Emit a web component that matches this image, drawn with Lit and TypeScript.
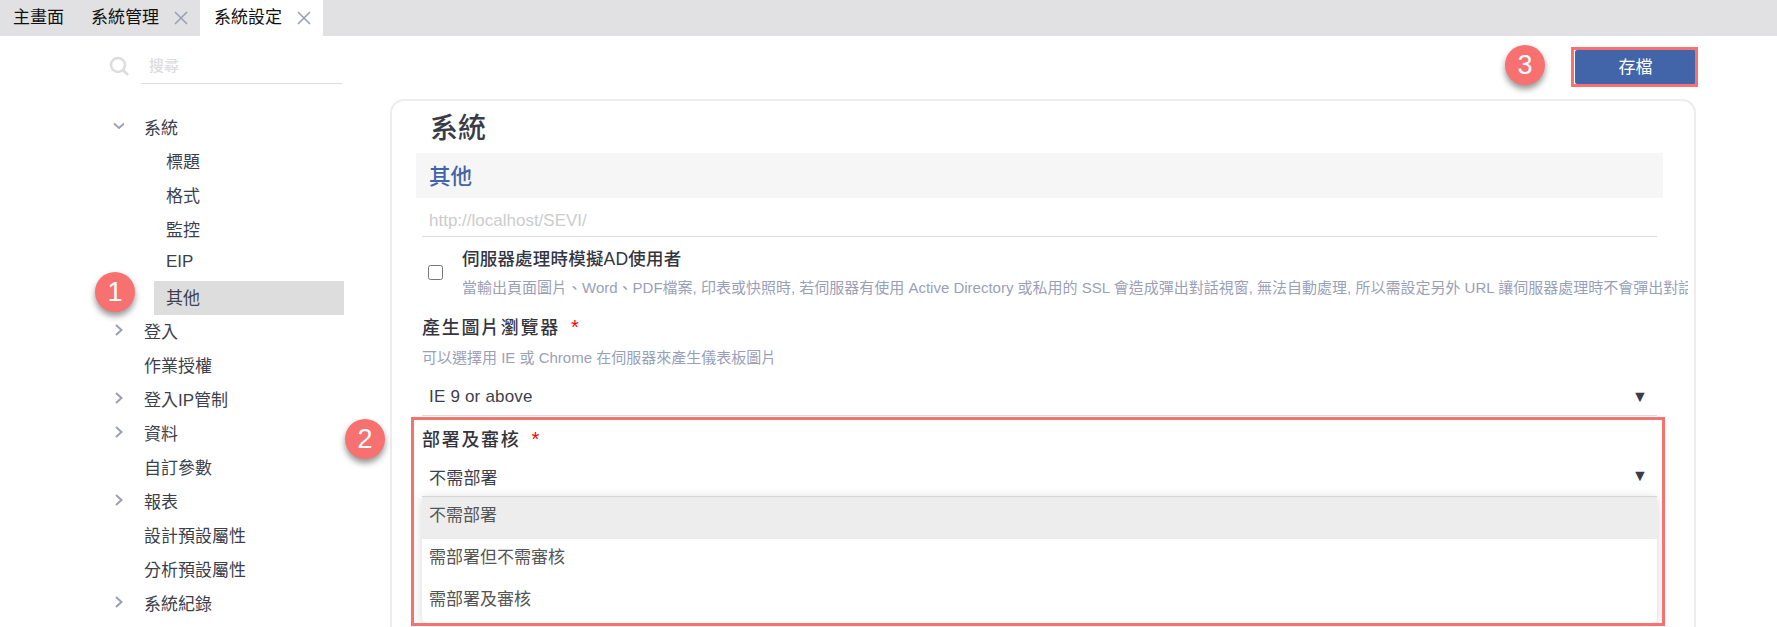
import { LitElement, html, css } from "lit";
import { customElement } from "lit/decorators.js";

const close = html`<svg class="x" viewBox="0 0 16 16" width="16" height="16"><path d="M2 2L14 14M14 2L2 14" stroke="#9a9fb2" stroke-width="1.6" fill="none"/></svg>`;
const chevRight = html`<svg viewBox="0 0 12 14" width="12" height="14"><path d="M3 2L8.5 7L3 12" stroke="#9a9fb8" stroke-width="2" fill="none"/></svg>`;
const chevDown = html`<svg viewBox="0 0 12 14" width="12" height="14"><path d="M1 4.5L6 9L11 4.5" stroke="#9a9fb8" stroke-width="1.8" fill="none"/></svg>`;

type NavItem = { label: string; chev?: "r" | "d"; sub?: boolean; active?: boolean };
const nav: NavItem[] = [
  { label: "系統", chev: "d" },
  { label: "標題", sub: true },
  { label: "格式", sub: true },
  { label: "監控", sub: true },
  { label: "EIP", sub: true },
  { label: "其他", sub: true, active: true },
  { label: "登入", chev: "r" },
  { label: "作業授權" },
  { label: "登入IP管制", chev: "r" },
  { label: "資料", chev: "r" },
  { label: "自訂參數" },
  { label: "報表", chev: "r" },
  { label: "設計預設屬性" },
  { label: "分析預設屬性" },
  { label: "系統紀錄", chev: "r" },
];

@customElement("app-root")
export class AppRoot extends LitElement {
  static styles = css`
    :host {
      display: block;
      height: 627px;
      overflow: hidden;
      background: #fff;
      position: relative;
      font-family: "Liberation Sans", "Noto Sans CJK TC", sans-serif;
      font-size: 17px;
      color: #3c3f4d;
    }
    .tabs { display: flex; height: 36px; background: #e1e1e4; color: #111; white-space: nowrap; }
    .tab { display: flex; align-items: center; gap: 14px; padding: 0 0 0 13px; line-height: 36px; box-sizing: border-box; }
    .tab.first { width: 66px; }
    .tab.second { width: 134px; padding-left: 25px; }
    .tab.on { background: #fff; width: 123px; padding-left: 14px; }
    .x { flex: none; }
    .body { display: flex; }
    .side { width: 390px; flex: none; box-sizing: border-box; padding: 13px 46px 0 109px; }
    .search { display: flex; align-items: center; gap: 12px; height: 34px; margin-right: 2px; }
    .search svg { flex: none; }
    .search .q { flex: 1; height: 34px; line-height: 34px; border-bottom: 1px solid #ddd; padding-left: 8px; color: #ddd; font-size: 15px; font-weight: 500; }
    .nav { margin-top: 28px; margin-left: 1px; }
    .row { height: 34px; padding-bottom: 4px; box-sizing: border-box; display: flex; align-items: center; }
    .row .ch { width: 34px; flex: none; display: flex; padding-left: 3px; box-sizing: border-box; }
    .row.sub { margin-left: 44px; padding-left: 12px; }
    .row.active { background: #ddd; }
    .main { width: 1308px; flex: none; }
    .bar { display: flex; justify-content: flex-end; padding: 14px 2px 0 0; height: 63px; box-sizing: border-box; }
    .save { width: 121px; height: 34px; background: #4264a9; color: #fff; border: 0; border-radius: 2px; font: inherit; font-size: 17px; padding: 0 0 3px; }
    .card { border: 2px solid #ededed; border-bottom: 0; border-radius: 14px 14px 0 0; height: 560px; box-sizing: border-box; padding: 2px 30px 0 24px; width: 1306px; }
    h1 { margin: 0; font-size: 28px; font-weight: 500; height: 50px; line-height: 52px; padding-left: 14px; color: #3a3c48; }
    h2 { margin: 0; width: 1247px; height: 45px; line-height: 49px; background: #f6f6f6; color: #4264a9; font-size: 21.5px; font-weight: 500; padding-left: 13px; box-sizing: border-box; }
    .inner { margin-left: 6px; width: 1235px; }
    .url { height: 38px; line-height: 45px; border-bottom: 1px solid #ddd; padding-left: 7px; color: #ccc; }
    .check { display: flex; align-items: center; margin-top: 9px; height: 54px; }
    .check input { width: 15px; height: 15px; margin: 0 19px 2px 6px; flex: none; accent-color: #555; }
    .check .txt { white-space: nowrap; width: 1226px; overflow: hidden; flex: none; }
    .check .lbl { color: #33353f; font-weight: 500; font-size: 17.5px; letter-spacing: 0.2px; line-height: 26px; }
    .check .desc { margin-top: 4px; }
    .desc { color: #9a9fb8; font-size: 15px; line-height: 24px; }
    .field-label { font-weight: 500; font-size: 18px; color: #33353f; line-height: 26px; letter-spacing: 1.7px; }
    .req { color: #f00; margin-left: 11px; font-size: 20px; }
    .f1 { margin-top: 14px; }
    .f1 .desc { margin-top: 5px; }
    .select { display: flex; justify-content: space-between; align-items: center; padding: 0 9px 0 7px; height: 36px; border-bottom: 1px solid #ddd; letter-spacing: 0.2px; }
    .f1 .select { margin-top: 9px; }
    .arrow { font-size: 16px; color: #3a3c48; }
    .f2 { position: relative; margin-top: 10px; }
    .f2 .select { margin-top: 3px; border-bottom: 0; height: 40px; }
    .hl2 { position: absolute; left: -11px; right: -8px; top: -9px; height: 209px; border: 3px solid #f87070; box-sizing: border-box; pointer-events: none; z-index: 2; }
    .hl3 { position: absolute; left: 1571px; top: 47px; width: 127px; height: 40px; border: 3px solid #f87070; box-sizing: border-box; z-index: 2; }
    .dd { border-top: 1px solid #d4d4d4; box-shadow: 0 2px 12px rgba(0, 0, 0, 0.16); border-radius: 0 0 5px 5px; background: #fff; }
    .opt { height: 42px; line-height: 38px; padding-left: 7px; color: #555; }
    .opt.sel { background: #ededed; }
    .badge { position: absolute; width: 40px; height: 40px; border-radius: 50%; background: #f87171; color: #fff; font-size: 27px; line-height: 40px; text-align: center; box-shadow: 0 4px 6px rgba(0, 0, 0, 0.42); z-index: 3; }
    .b1 { left: 95px; top: 272px; }
    .b2 { left: 345px; top: 419px; }
    .b3 { left: 1505px; top: 45px; }
  `;

  render() {
    return html`
      <div class="tabs">
        <div class="tab first">主畫面</div>
        <div class="tab second">系統管理${close}</div>
        <div class="tab on">系統設定${close}</div>
      </div>
      <div class="body">
        <aside class="side">
          <div class="search">
            <svg viewBox="0 0 20 20" width="20" height="20"><circle cx="9" cy="9" r="7" stroke="#ddd" stroke-width="2.6" fill="none"/><path d="M14 14L19 19" stroke="#ddd" stroke-width="2.6"/></svg>
            <div class="q">搜尋</div>
          </div>
          <div class="nav">
            ${nav.map(
              (n) => html`<div class="row ${n.sub ? "sub" : ""} ${n.active ? "active" : ""}">
                ${n.sub ? "" : html`<span class="ch">${n.chev === "d" ? chevDown : n.chev === "r" ? chevRight : ""}</span>`}
                <span>${n.label}</span>
              </div>`
            )}
          </div>
        </aside>
        <main class="main">
          <div class="bar"><button class="save">存檔</button></div>
          <section class="card">
            <h1>系統</h1>
            <h2>其他</h2>
            <div class="inner">
              <div class="url">http://localhost/SEVI/</div>
              <div class="check">
                <input type="checkbox" />
                <div class="txt">
                  <div class="lbl">伺服器處理時模擬AD使用者</div>
                  <div class="desc">當輸出頁面圖片、Word、PDF檔案, 印表或快照時, 若伺服器有使用 Active Directory 或私用的 SSL 會造成彈出對話視窗, 無法自動處理, 所以需設定另外 URL 讓伺服器處理時不會彈出對話視窗</div>
                </div>
              </div>
              <div class="f1">
                <div class="field-label">產生圖片瀏覽器<span class="req">*</span></div>
                <div class="desc">可以選擇用 IE 或 Chrome 在伺服器來產生儀表板圖片</div>
                <div class="select"><span>IE 9 or above</span><span class="arrow">▼</span></div>
              </div>
              <div class="f2">
                <div class="hl2"></div>
                <div class="field-label">部署及審核<span class="req">*</span></div>
                <div class="select"><span>不需部署</span><span class="arrow">▼</span></div>
                <div class="dd">
                  <div class="opt sel">不需部署</div>
                  <div class="opt">需部署但不需審核</div>
                  <div class="opt">需部署及審核</div>
                </div>
              </div>
            </div>
          </section>
        </main>
      </div>
      <div class="hl3"></div>
      <div class="badge b1">1</div>
      <div class="badge b2">2</div>
      <div class="badge b3">3</div>
    `;
  }
}
